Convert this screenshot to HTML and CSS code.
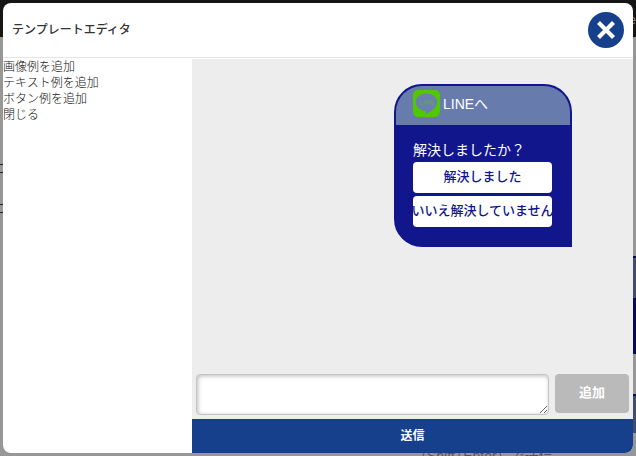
FILE: index.html
```html
<!DOCTYPE html>
<html lang="ja">
<head>
<meta charset="utf-8">
<title>テンプレートエディタ</title>
<link rel="stylesheet" href="styles.css">
</head>
<body>
<div class="backdrop" aria-hidden="true">
  <div class="topbar">e</div>
  <div class="rows"><i></i><i></i><i></i><i></i></div>
  <div class="page-bubble"></div>
  <div class="page-bubble page-bubble-next"></div>
  <div class="hint">（Shift+Enter）で送信</div>
</div>
<section class="modal" role="dialog" aria-labelledby="title">
  <header class="modal-header">
    <h1 id="title">テンプレートエディタ</h1>
    <button class="close" type="button" aria-label="閉じる">
      <svg viewBox="0 0 36 36" width="36" height="36"><circle cx="18" cy="18" r="18" fill="#163f8c"/><path d="M10.500 10.500 25.500 25.500M25.500 10.500 10.500 25.500" stroke="#fff" stroke-width="4.200"/></svg>
    </button>
  </header>
  <div class="modal-body">
    <nav class="sidebar">
      <a href="#image">画像例を追加</a>
      <a href="#text">テキスト例を追加</a>
      <a href="#button">ボタン例を追加</a>
      <a href="#close">閉じる</a>
    </nav>
    <main class="editor">
      <div class="preview">
        <article class="bubble">
          <div class="bubble-header">
            <svg class="line-logo" viewBox="0 0 27 27" width="27" height="27"><rect width="27" height="27" rx="5" fill="#50c800"/><path d="M13.500 3.500C7.500 3.500 2.700 7.400 2.700 12.300c0 4.300 3.900 7.900 9.100 8.600 1.200.3.900 1 .7 2.600 0 .7.300.9.900.5 3.300-2 10.900-6.100 10.900-11.700C24.300 7.400 19.500 3.500 13.500 3.500Z" fill="#6a7fad"/><path d="M7.500 10v4.500h2.600M11.800 10v4.500M13.800 14.500V10l2.800 4.500V10M21 10h-2.400v4.500H21M18.600 12.200H21" fill="none" stroke="#5fa85a" stroke-width=".8"/></svg>
            <span>LINEへ</span>
          </div>
          <div class="bubble-content">
            <p>解決しましたか？</p>
            <button class="choice" type="button">解決しました</button>
            <button class="choice" type="button">いいえ解決していません</button>
          </div>
        </article>
      </div>
      <div class="composer">
        <textarea aria-label="メッセージ"></textarea>
        <button class="add" type="button">追加</button>
      </div>
      <button class="send" type="button">送信</button>
    </main>
  </div>
</section>
</body>
</html>
```
FILE: styles.css
```css
* { box-sizing: border-box; }
body {
  margin: 0;
  height: 100vh;
  padding: 3px;
  overflow: hidden;
  font: 12px/16px "Liberation Sans", "Noto Sans CJK JP", sans-serif;
  color: #333;
}
button { font: inherit; border: 0; padding: 0; cursor: pointer; }
.backdrop {
  position: absolute;
  inset: 0;
  overflow: hidden;
  background: #979797;
}
.topbar {
  height: 37px;
  padding-top: 12px;
  background: #151515;
  color: #8a8275;
  text-align: right;
}
.rows { width: 3px; padding-top: 127px; }
.rows i { display: block; height: 1px; background: #222; margin-bottom: 7px; }
.rows i:nth-child(2) { margin-bottom: 31px; }
.page-bubble {
  position: absolute;
  right: 0;
  top: 256px;
  width: 4px;
  height: 98px;
  border-top: 2px solid #080a55;
  background: linear-gradient(#414d6c 40px, #080a55 40px);
}
.page-bubble-next { top: 394px; height: 39px; background: #414d6c; }
.hint {
  position: absolute;
  left: 413px;
  bottom: -8px;
  font-size: 14px;
  color: #555;
}
.modal {
  position: relative;
  height: 100%;
  display: flex;
  flex-direction: column;
  overflow: hidden;
  border-radius: 8px;
  background: #fff;
}
.modal-header {
  display: flex;
  align-items: center;
  justify-content: space-between;
  height: 55px;
  padding: 0 9px;
  border-bottom: 1px solid #e5e5e5;
}
h1 { margin: 0; font-size: 12px; font-weight: 500; }
.close { width: 36px; height: 36px; background: none; }
.close svg { display: block; }
.modal-body { flex: 1; display: flex; min-height: 0; }
.sidebar {
  width: 30%;
  display: flex;
  flex-direction: column;
  padding-top: 1px;
}
.sidebar a {
  color: #111;
  font-weight: 300;
  text-decoration: none;
}
.editor {
  flex: 1;
  display: flex;
  flex-direction: column;
  border-top: 1px solid #fff;
  background: #ededed;
}
.preview {
  flex: 1;
  display: flex;
  justify-content: flex-end;
  align-items: flex-start;
  padding: 25px 61px 0 0;
}
.bubble {
  width: 178px;
  overflow: hidden;
  border: 2px solid #11168c;
  border-radius: 28px 28px 0 28px;
  background: #11168c;
  color: #fff;
  font-size: 14px;
}
.bubble-header {
  display: flex;
  align-items: center;
  gap: 3px;
  height: 39px;
  padding: 0 17px 4px;
  background: #687bad;
}
.bubble-content {
  display: flex;
  flex-direction: column;
  gap: 3px;
  padding: 16px 18px 18px 17px;
}
.bubble p { margin: 0; line-height: 18px; }
.choice {
  display: flex;
  align-items: center;
  justify-content: center;
  height: 31px;
  padding-bottom: 2px;
  border-radius: 4px;
  background: #fff;
  color: #11168c;
  font-size: 13px;
  font-weight: 500;
  white-space: nowrap;
}
.composer { display: flex; gap: 6px; padding: 4px; }
textarea {
  flex: 1;
  min-width: 0;
  height: 41px;
  border: 1px solid #c4c4c4;
  border-radius: 4px;
  background: #fff;
  box-shadow: inset 1px 1px 4px #bbb;
  font: inherit;
}
.add {
  width: 74px;
  height: 39px;
  padding-bottom: 2px;
  border-radius: 4px;
  background: #bababa;
  color: #fff;
  font-size: 13px;
  font-weight: 700;
}
.send {
  height: 34px;
  background: #163f8c;
  color: #fff;
  font-weight: 700;
}
```
